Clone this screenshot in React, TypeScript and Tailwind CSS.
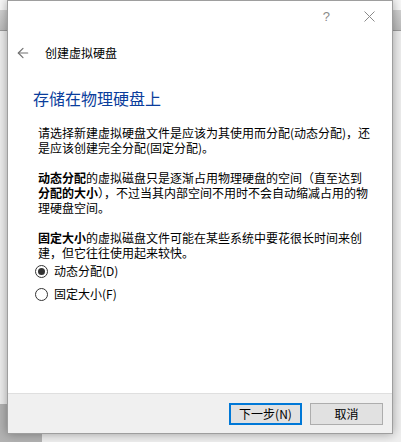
import { ArrowLeft } from "lucide-react"

const cjk = "font-['Noto_Sans_CJK_SC','Noto_Sans',sans-serif]"

function CloseGlyph() {
  return (
    <svg width="11" height="11" viewBox="0 0 11 11" className="block">
      <path d="M0.5 0.5 L10.5 10.5 M10.5 0.5 L0.5 10.5" stroke="#8a8a8a" strokeWidth="1" fill="none" />
    </svg>
  )
}

function Radio({ checked, label }: { checked?: boolean; label: string }) {
  return (
    <label className="flex items-center gap-[6px] h-[16px]">
      <span className="w-[13px] h-[13px] rounded-full border border-[#333] bg-white flex items-center justify-center">
        {checked && <span className="w-[7px] h-[7px] rounded-full bg-[#333]" />}
      </span>
      <span className="text-[12px] leading-[16px] text-black">{label}</span>
    </label>
  )
}

export default function App() {
  return (
    <div className={`relative w-[401px] h-[442px] overflow-hidden ${cjk}`}>
      {/* the main window lying behind the dialog */}
      <div className="flex flex-col w-full h-full">
        <div className="h-[10px] bg-[#f8f8f8]" />
        <div className="h-[20px] bg-gradient-to-b from-[#d2d2d2] to-[#bcbcbc]" />
        <div className="h-[1px] bg-[#9c9c9c]" />
        <div className="flex-1 bg-[#eeeeee]" />
        <div className="h-[38px] flex">
          <div className="w-[42px] bg-[#b3b3b3]" />
          <div className="flex-1 bg-[#efefef]" />
        </div>
      </div>

      {/* wizard dialog */}
      <div className="absolute left-[7px] top-0 w-[386px] h-[434px] bg-white border border-[#9e9e9e] shadow-[0_0_10px_rgba(0,0,0,0.35)] flex flex-col">
        <div className="h-[30px] flex items-center justify-end pr-[17px] gap-[34px] shrink-0">
          <span className="text-[13px] leading-none text-[#8a8a8a] font-['Liberation_Sans',sans-serif]">?</span>
          <CloseGlyph />
        </div>

        <div className="flex items-center h-[20px] mt-[12px] pl-[7px]">
          <ArrowLeft className="w-[16px] h-[16px] text-[#707070]" strokeWidth={1.75} />
          <span className="ml-[14px] text-[12px] text-black">创建虚拟硬盘</span>
        </div>

        <div className="mt-[24px] pl-[25px] text-[16px] leading-[22px] text-[#0a3d9c]">存储在物理硬盘上</div>

        <div className="mt-[16px] pl-[30px] text-[12px] leading-[15px] text-black whitespace-nowrap flex flex-col">
          <p>
            请选择新建虚拟硬盘文件是应该为其使用而分配(动态分配)，还
            <br />
            是应该创建完全分配(固定分配)。
          </p>
          <p className="mt-[15px]">
            <b>动态分配</b>的虚拟磁盘只是逐渐占用物理硬盘的空间（直至达到
            <br />
            <b>分配的大小</b>），不过当其内部空间不用时不会自动缩减占用的物
            <br />
            理硬盘空间。
          </p>
          <p className="mt-[15px]">
            <b>固定大小</b>的虚拟磁盘文件可能在某些系统中要花很长时间来创
            <br />
            建，但它往往使用起来较快。
          </p>
          <div className="mt-[3px] flex flex-col gap-[7px] -ml-[3px]">
            <Radio checked label="动态分配(D)" />
            <Radio label="固定大小(F)" />
          </div>
        </div>

        <div className="flex-1" />

        <div className="h-[40px] shrink-0 bg-[#f0f0f0] border-t border-[#dfdfdf] flex justify-end items-start pt-[9px] pr-[9px] gap-[8px]">
          <button className="w-[73px] h-[22px] bg-[#e1e1e1] border-2 border-[#0078d7] text-[12px] leading-none text-black">
            下一步(N)
          </button>
          <button className="w-[73px] h-[22px] bg-[#e1e1e1] border border-[#adadad] text-[12px] leading-none text-black">
            取消
          </button>
        </div>
      </div>
    </div>
  )
}
